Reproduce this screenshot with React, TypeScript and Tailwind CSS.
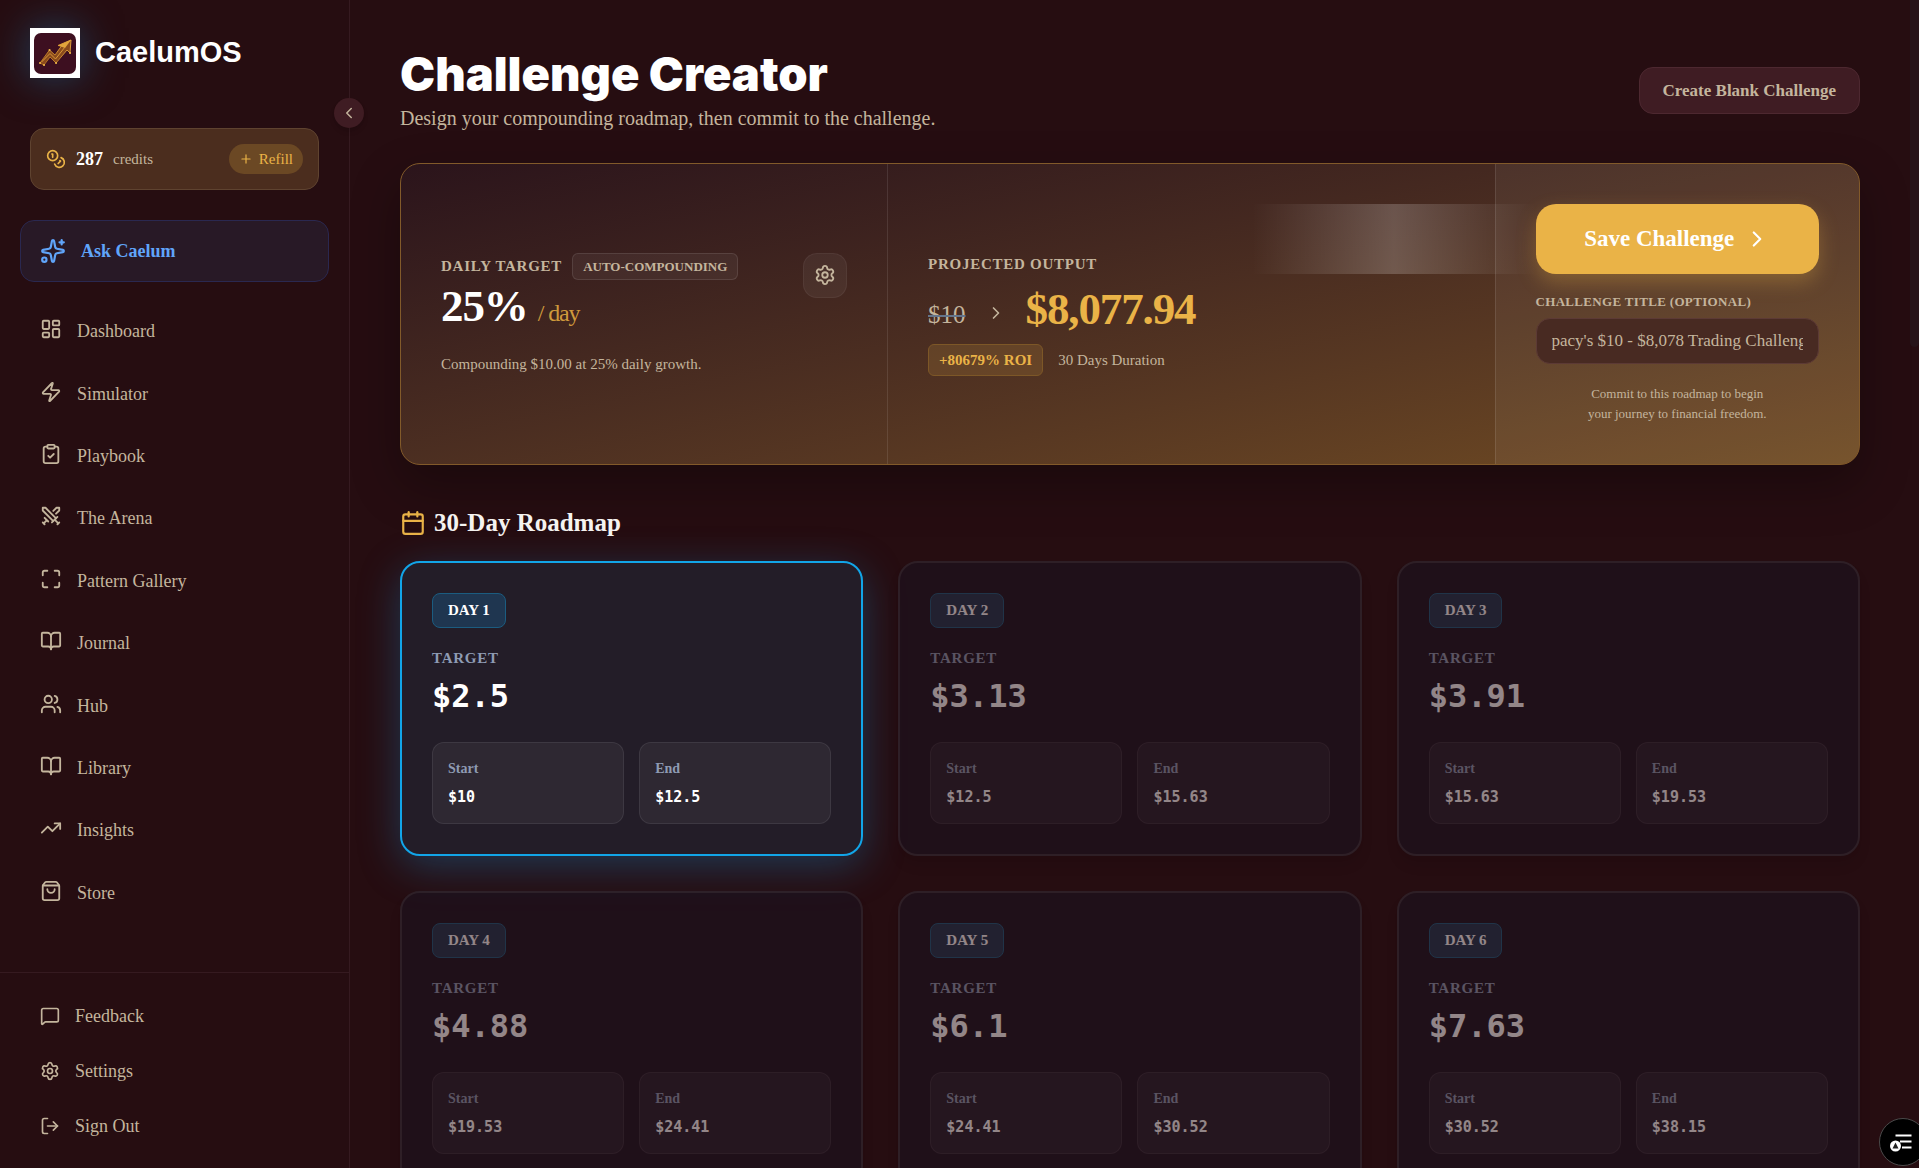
import type { ReactNode } from 'react';
import {
  BookOpen,
  Calendar,
  ChevronLeft,
  ChevronRight,
  ClipboardCheck,
  Coins,
  LayoutDashboard,
  LogOut,
  Maximize,
  MessageSquare,
  Plus,
  Settings,
  ShoppingBag,
  Sparkles,
  Swords,
  TrendingUp,
  Users,
  Zap,
  type LucideIcon,
} from 'lucide-react';

interface NavItem {
  label: string;
  icon: LucideIcon;
}

interface RoadmapDay {
  day: number;
  start: number;
  end: number;
  target: number;
}

const START_BALANCE = 10;
const DAILY_RATE = 0.25;
const VISIBLE_DAYS = 6;

const navItems: NavItem[] = [
  { label: 'Dashboard', icon: LayoutDashboard },
  { label: 'Simulator', icon: Zap },
  { label: 'Playbook', icon: ClipboardCheck },
  { label: 'The Arena', icon: Swords },
  { label: 'Pattern Gallery', icon: Maximize },
  { label: 'Journal', icon: BookOpen },
  { label: 'Hub', icon: Users },
  { label: 'Library', icon: BookOpen },
  { label: 'Insights', icon: TrendingUp },
  { label: 'Store', icon: ShoppingBag },
];

const footerItems: NavItem[] = [
  { label: 'Feedback', icon: MessageSquare },
  { label: 'Settings', icon: Settings },
  { label: 'Sign Out', icon: LogOut },
];

const round = (n: number) => Math.round(n * 100) / 100;

const roadmap: RoadmapDay[] = Array.from({ length: VISIBLE_DAYS }, (_, i) => {
  const start = START_BALANCE * (1 + DAILY_RATE) ** i;
  return {
    day: i + 1,
    start: round(start),
    end: round(start * (1 + DAILY_RATE)),
    target: round(start * DAILY_RATE),
  };
});

export default function App() {
  return (
    <div className="flex h-screen overflow-hidden bg-[#260d11] font-['Liberation_Serif',serif] text-[#c4b59d]">
      <Sidebar />

      <main className="min-w-0 flex-1 overflow-y-auto pt-[50px] pr-[59px] pb-12 pl-[50px] [scrollbar-width:none]">
        {/* Header */}
        <header className="flex items-start justify-between">
          <div>
            <h1 className="font-['Inter',sans-serif] text-[47px] leading-[48px] font-black text-white">
              Challenge Creator
            </h1>
            <p className="text-[20px] leading-10">
              Design your compounding roadmap, then commit to the challenge.
            </p>
          </div>
          <button
            type="button"
            className="mt-[17px] h-[47px] rounded-[14px] border border-[#4d2830] bg-[#3f1c23] px-[23px] text-[17px] font-bold"
          >
            Create Blank Challenge
          </button>
        </header>

        <SummaryPanel />

        {/* Roadmap */}
        <h2 className="mt-11 flex items-center gap-2 text-[25px] leading-7 font-bold text-[#f5f3f0]">
          <Calendar size={26} className="text-[#eab347]" />
          30-Day Roadmap
        </h2>
        <div className="mt-6 grid grid-cols-3 gap-[35px]">
          {roadmap.map((item) => (
            <DayCard key={item.day} item={item} active={item.day === 1} />
          ))}
        </div>
      </main>

      {/* Scroll thumb */}
      <div className="fixed top-0 right-0 h-[347px] w-[9px] rounded-b-md bg-[#261419]" />
      <AccessibilityButton />
    </div>
  );
}

function Sidebar() {
  return (
    <aside className="relative flex w-[350px] shrink-0 flex-col border-r border-[#351a20] pt-7">
      <div className="flex items-center gap-[15px] px-[30px]">
        <Logo />
        <span className="font-['Liberation_Sans',sans-serif] text-[29px] font-bold text-white">
          CaelumOS
        </span>
      </div>

      <button
        type="button"
        aria-label="Collapse sidebar"
        className="absolute top-[98px] -right-[15px] flex size-[30px] items-center justify-center rounded-full bg-[#3f1c23] shadow-md"
      >
        <ChevronLeft size={18} />
      </button>

      {/* Credits */}
      <div className="mx-[30px] mt-[50px] flex h-[62px] items-center rounded-[14px] border border-[#5f4330] bg-[#4b2d1e] px-[15px]">
        <Coins size={20} className="text-[#eab347]" />
        <span className="ml-2.5 text-lg font-bold text-white">287</span>
        <span className="ml-2.5 text-[15px]">credits</span>
        <button
          type="button"
          className="ml-auto flex h-[30px] items-center gap-1.5 rounded-full bg-[#6b4824] px-2.5 text-[15px] text-[#eab347]"
        >
          <Plus size={14} />
          Refill
        </button>
      </div>

      <a
        href="#ask"
        className="mx-5 mt-[30px] flex h-[62px] items-center gap-[15px] rounded-[14px] border border-[#2a2850] bg-[#281926] px-[19px] text-lg font-bold text-[#60a5fa]"
      >
        <Sparkles size={26} />
        Ask Caelum
      </a>

      <nav className="mt-[18px] mb-12 grid flex-1 auto-rows-fr px-10">
        {navItems.map(({ label, icon: Icon }) => (
          <a key={label} href="#" className="flex items-center gap-[15px] text-lg">
            <Icon size={22} className="mb-1" />
            {label}
          </a>
        ))}
      </nav>

      <div className="border-t border-[#351a20] px-10 py-[15px]">
        {footerItems.map(({ label, icon: Icon }) => (
          <a key={label} href="#" className="flex h-[55px] items-center gap-[15px] text-lg">
            <Icon size={20} />
            {label}
          </a>
        ))}
      </div>
    </aside>
  );
}

function SummaryPanel() {
  return (
    <section className="mt-[25px] grid grid-cols-[12fr_15fr_9fr] overflow-hidden rounded-[20px] border border-[#825a2a] bg-linear-to-br from-[#2b141b] to-[#704b22] shadow-[0_20px_50px_rgba(0,0,0,0.3)]">
      {/* Daily target */}
      <div className="flex items-center p-10">
        <div className="flex flex-1 items-start">
          <div className="flex-1">
            <div className="flex items-center gap-2.5">
              <Label>Daily Target</Label>
              <span className="rounded-md border border-white/10 bg-white/5 px-2.5 text-[13px] leading-[25px] font-bold uppercase">
                Auto-Compounding
              </span>
            </div>
            <p className="text-[45px] leading-[52px] font-bold tracking-tight text-white">
              25% <span className="text-2xl font-normal text-[#cf9a3c]">/ day</span>
            </p>
            <p className="mt-5 text-[15px] leading-6">
              Compounding $10.00 at 25% daily growth.
            </p>
          </div>
          <button
            type="button"
            aria-label="Target settings"
            className="flex h-[45px] w-11 items-center justify-center rounded-[14px] border border-white/5 bg-white/5"
          >
            <Settings size={22} />
          </button>
        </div>
      </div>

      {/* Projected output */}
      <div className="flex flex-col justify-center border-l border-white/10 p-10">
        <Label>Projected Output</Label>
        <div className="mt-1.5 flex items-center">
          <span className="mt-3 text-[25px] line-through decoration-[#64748b] decoration-2">$10</span>
          <ChevronRight size={20} className="mx-5 mt-2" />
          <span className="text-[45px] leading-[54px] font-bold tracking-tight text-[#eab347]">
            $8,077.94
          </span>
        </div>
        <div className="mt-2 flex items-center gap-[15px] text-[15px]">
          <span className="rounded-md border border-[#7d5727] bg-[#eab347]/15 px-2.5 leading-[30px] font-bold text-[#eab347]">
            +80679% ROI
          </span>
          30 Days Duration
        </div>
      </div>

      {/* Commit */}
      <div className="border-l border-white/10 bg-white/5 p-10">
        <button
          type="button"
          className="relative flex h-[70px] w-full items-center justify-center gap-2.5 rounded-[20px] bg-[#eab347] text-[23px] font-bold text-white shadow-[0_8px_20px_rgba(234,179,71,0.3)]"
        >
          <span className="absolute inset-y-0 right-full w-full bg-linear-to-r from-transparent via-white/20 to-transparent" />
          Save Challenge
          <ChevronRight size={26} />
        </button>
        <label htmlFor="challenge-title" className="mt-5 mb-2 block text-[13px] leading-4 font-bold tracking-wide uppercase">
          Challenge Title (Optional)
        </label>
        <input
          id="challenge-title"
          type="text"
          defaultValue="pacy's $10 - $8,078 Trading Challenge"
          className="h-[46px] w-full rounded-[14px] border border-[#5c3a35] bg-[#482a22] px-[15px] text-[17px]"
        />
        <p className="mt-5 text-center text-[13px] leading-5">
          Commit to this roadmap to begin
          <br />
          your journey to financial freedom.
        </p>
      </div>
    </section>
  );
}

function Label({ children }: { children: ReactNode }) {
  return <span className="text-[15px] leading-6 font-bold tracking-wider uppercase">{children}</span>;
}

function DayCard({ item, active }: { item: RoadmapDay; active: boolean }) {
  return (
    <article
      className={
        active
          ? 'rounded-[20px] border-2 border-[#12a5e8] bg-[#231d28] p-[30px] text-white shadow-[0_10px_40px_rgba(25,110,165,0.45)]'
          : 'rounded-[20px] border-2 border-[#37323c] bg-[#1a1322] p-[30px] text-white opacity-50 shadow-lg'
      }
    >
      <div className="w-fit rounded-lg border border-[#1b5c80] bg-[#1f3650] px-[15px] text-[15px] leading-[33px] font-bold">
        DAY {item.day}
      </div>
      <h3 className="mt-[18px] text-[15px] leading-6 font-bold tracking-wider text-[#8e9bb3]">TARGET</h3>
      <p className="mt-1.5 font-['DejaVu_Sans_Mono',monospace] text-[32px] leading-10 font-bold">
        ${item.target}
      </p>
      <dl className="mt-[26px] grid grid-cols-2 gap-[15px]">
        <Balance label="Start" value={item.start} />
        <Balance label="End" value={item.end} />
      </dl>
    </article>
  );
}

function Balance({ label, value }: { label: string; value: number }) {
  return (
    <div className="rounded-xl border border-white/8 bg-white/5 p-[15px] font-bold">
      <dt className="text-sm leading-[22px] text-[#8e9bb3]">{label}</dt>
      <dd className="mt-1.5 font-['DejaVu_Sans_Mono',monospace] text-[15px] leading-[22px]">${value}</dd>
    </div>
  );
}

function Logo() {
  return (
    <svg viewBox="0 0 50 50" className="size-[50px] shadow-[0_0_40px_rgba(30,120,175,0.5)]" aria-hidden="true">
      <defs>
        <linearGradient id="gold" x1="0" y1="1" x2="1" y2="0">
          <stop offset="0" stopColor="#a8651f" />
          <stop offset="1" stopColor="#e3a53c" />
        </linearGradient>
      </defs>
      <rect width="50" height="50" fill="#fff" />
      <rect x="4" y="5" width="42" height="41" rx="7" fill="#3d0f20" />
      <path
        d="M10 35 L19.500 22 L25 27 L31.500 18 L28 17.500 L41 12 L40 25 L37 22 L26 35 L20 29 L14 37 Z"
        fill="#8a4a1c"
        stroke="url(#gold)"
        strokeLinejoin="round"
      />
      <path d="M28 17.500 L41 12 L35 20 Z" fill="#e3a53c" />
      <path d="M11.500 34 L20 25.500 L25.500 31 L35 19" fill="none" stroke="#d99a38" />
      <path d="M10 35h.1M14 37h.1M19.500 22h.1M26 35h.1M40 25h.1" stroke="#f0b848" strokeWidth="2" strokeLinecap="round" />
    </svg>
  );
}

function AccessibilityButton() {
  return (
    <button
      type="button"
      aria-label="Accessibility options"
      className="fixed right-[-8px] bottom-[2px] flex size-12 items-center justify-center rounded-full border border-[#4a4a4a] bg-black pr-1"
    >
      <svg viewBox="0 0 24 20" width="24" height="20" aria-hidden="true">
        <path d="M6.500 3.500h16M11 9.500h11.500M13 15.500h9.500" stroke="#fff" strokeWidth="2" />
        <circle cx="6.500" cy="14" r="5.500" fill="#fff" />
        <path d="M6.500 10.500l3 6h-6z" fill="#222" />
      </svg>
    </button>
  );
}
